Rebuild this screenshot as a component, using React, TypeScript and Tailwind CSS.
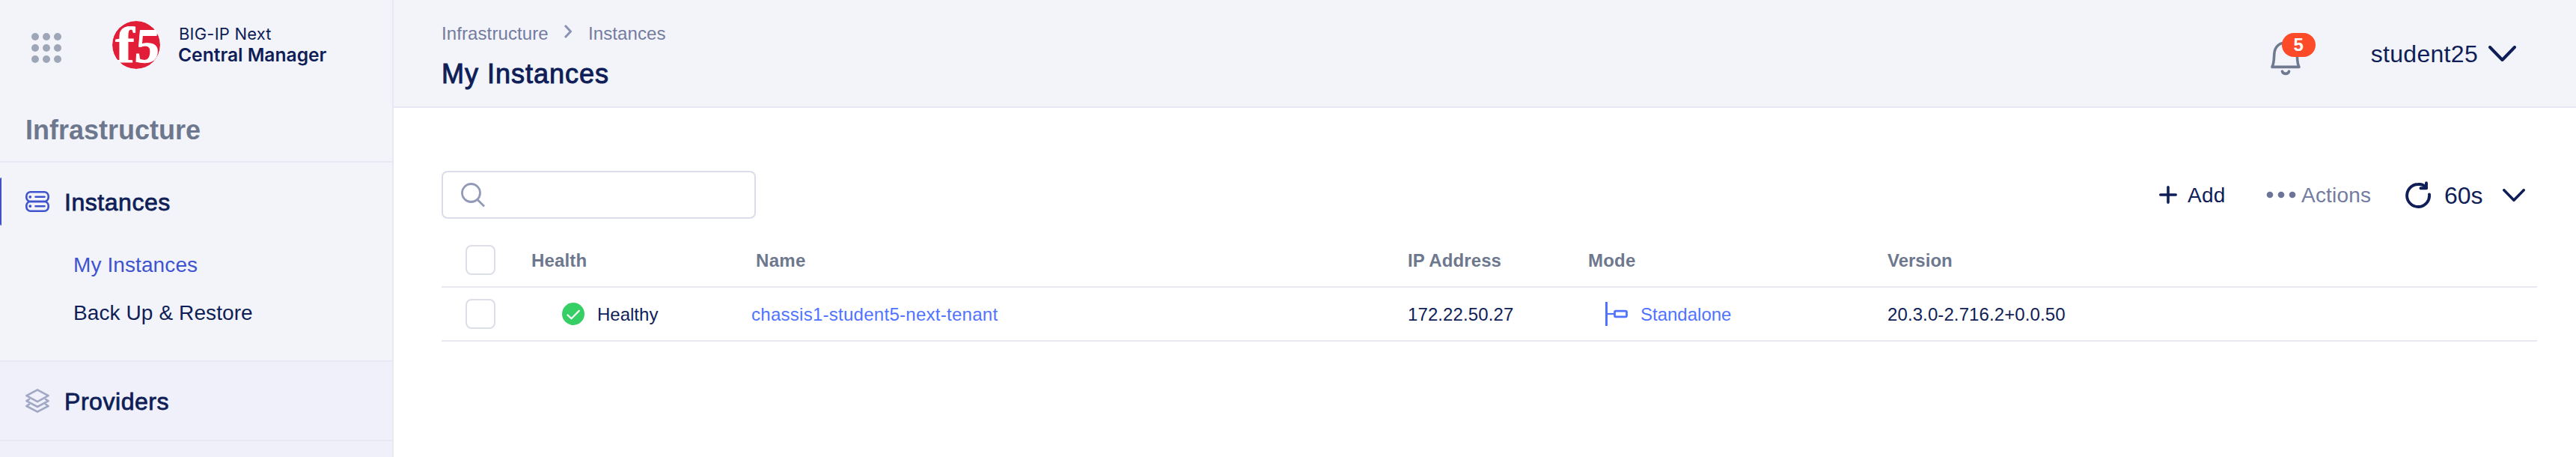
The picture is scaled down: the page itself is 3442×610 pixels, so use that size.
import React from "react";

const sans = "font-['Liberation_Sans',Arial,sans-serif]";

function GridDots() {
  const pos = [5, 20, 35];
  return (
    <svg width="40" height="40" viewBox="0 0 40 40" fill="#9ea7b8">
      {pos.map((y) => pos.map((x) => <circle key={`${x}-${y}`} cx={x} cy={y} r="5" />))}
    </svg>
  );
}

function Logo() {
  return (
    <svg className="overflow-visible" width="64" height="64" viewBox="0 0 64 64" fontFamily="Liberation Serif, serif" fontWeight="700">
      <circle cx="32" cy="32" r="32" fill="#e21d38" />
      <g fill="#fff" stroke="#fff">
        <text transform="translate(4 55) scale(1.16 1)" fontSize="67" strokeWidth="0.8">f</text>
        <text transform="translate(29 55) skewX(-5) scale(1 1)" fontSize="65" strokeWidth="1">5</text>
      </g>
      <circle cx="32" cy="32" r="36" fill="none" stroke="#f3f4fa" strokeWidth="8" />
    </svg>
  );
}

function ServerIcon() {
  return (
    <svg width="32" height="28" viewBox="0 0 32 28" fill="none" stroke="#3f54cc" strokeWidth="2.6" strokeLinecap="round">
      <rect x="1.3" y="1.3" width="29.4" height="12.7" rx="5.5" />
      <rect x="1.3" y="14" width="29.4" height="12.7" rx="5.5" />
      <path d="M13.5 7.8h12M13.5 20.2h12" />
      <circle cx="6.3" cy="7.8" r="1.1" fill="#3f54cc" strokeWidth="1.6" />
      <circle cx="6.3" cy="20.2" r="1.1" fill="#3f54cc" strokeWidth="1.6" />
    </svg>
  );
}

function LayersIcon() {
  return (
    <svg width="32" height="32" viewBox="0 0 32 32" fill="none" stroke="#a1a8c4" strokeWidth="2.6" strokeLinejoin="round" strokeLinecap="round">
      <path d="M16 1.3 30.6 9.2 16 17.2 1.4 9.2Z" />
      <path d="M5 14 1.4 16.2 16 24l14.6-7.8L27 14" />
      <path d="M5 20.6 1.4 23 16 30.7 30.6 23 27 20.6" />
    </svg>
  );
}

function BellIcon() {
  return (
    <svg width="40" height="48" viewBox="0 0 40 48" fill="none" stroke="#6f7a91" strokeWidth="3.6" strokeLinecap="round" strokeLinejoin="round">
      <path d="M2 35.4H38C35.4 31 35.8 26 35.2 18 34.6 8 28 3 20 3S5.4 8 4.8 18C4.4 26 4.4 31 2 35.4Z" />
      <path d="M15.5 41.300C16.5 45.4 23.5 45.4 24.5 41.3" />
    </svg>
  );
}

function Chevron({ w, h, stroke }: { w: number; h: number; stroke: number }) {
  const p = stroke / 2;
  return (
    <svg width={w} height={h} viewBox={`0 0 ${w} ${h}`} fill="none" stroke="#0f1e57" strokeWidth={stroke} strokeLinecap="round" strokeLinejoin="round">
      <path d={`M${p} ${p} ${w / 2} ${h - p} ${w - p} ${p}`} />
    </svg>
  );
}

function RefreshIcon() {
  return (
    <svg width="36" height="36" viewBox="0 0 36 36" fill="none" stroke="#0f1e57" strokeWidth="3.9" strokeLinecap="round" strokeLinejoin="round">
      <path d="M33 17.5A15 15 0 1 1 18 4C22.5 3.6 26.5 5.2 29 9" />
      <path d="M29 2.2V9.3H21.5" />
    </svg>
  );
}

function StandaloneIcon() {
  return (
    <svg width="30" height="32" viewBox="0 0 30 32" fill="none" stroke="#4f73ff">
      <path d="M1.5 0V32" strokeWidth="3" />
      <path d="M2 16H12" strokeWidth="2.2" />
      <rect x="12.5" y="12.2" width="16" height="7.6" rx="1.5" strokeWidth="2.8" />
    </svg>
  );
}

function Checkbox() {
  return <span className="block h-10 w-10 rounded-[8px] border-2 border-[#dcdee8] bg-white" />;
}

const cols = "grid grid-cols-[32px_88px_294px_877px_241px_400px_1fr] items-center h-[72px] border-b-2 border-[#e8e9f0] text-[24px] leading-[28px] whitespace-nowrap";

function Sidebar() {
  return (
    <aside className="flex w-[526px] shrink-0 flex-col border-r-2 border-[#e7e8f3] bg-[#f3f4fa]">
      <div className="flex h-[120px] items-start pt-7">
        <div className="mt-4 ml-[42px]"><GridDots /></div>
        <div className="ml-[68px]"><Logo /></div>
        <div className="mt-[3px] ml-[24px] font-['Inter',sans-serif] whitespace-nowrap">
          <div className="pl-px text-[22px] leading-[28px] tracking-[0.2px]">BIG-IP Next</div>
          <div className="text-[24.6px] leading-[28px] font-semibold">Central Manager</div>
        </div>
      </div>
      <div className="h-[97px] border-b-2 border-[#e7e8f3] pt-[34px] pl-[34px] text-[36px] leading-[40px] font-bold text-[#6d788e]">
        Infrastructure
      </div>
      <div className="h-[266px] border-b-2 border-[#e7e8f3] pt-5">
        <div className="flex h-16 items-center rounded-l-[2px] border-l-2 border-[#3f51cc] pl-8">
          <ServerIcon />
          <span className="mt-px ml-[20px] text-[32px] leading-[36px] tracking-[0.55px] [-webkit-text-stroke:0.8px_#0f1e57]">Instances</span>
        </div>
        <div className="mt-5 flex h-16 items-center pt-px pl-[98px] text-[28px] tracking-[0.1px] text-[#3d53cf]">My Instances</div>
        <div className="flex h-16 items-center pt-px pl-[98px] text-[28px] tracking-[0.1px]">{"Back Up & Restore"}</div>
      </div>
      <div className="flex h-[106px] items-center border-b-2 border-[#e7e8f3] bg-[#f0f0fa] pl-[34px]">
        <LayersIcon />
        <span className="mt-[2px] ml-[20px] text-[32px] leading-[36px] tracking-[0.55px] [-webkit-text-stroke:0.8px_#0f1e57]">Providers</span>
      </div>
      <div className="flex-1 bg-[#f0f0fa]" />
    </aside>
  );
}

function Header() {
  return (
    <header className="flex h-[144px] items-start justify-between border-b-2 border-[#e7e8f3] bg-[#f3f4fa] pl-16">
      <div className="pt-[31px] whitespace-nowrap">
        <div className="flex h-7 items-start text-[24px] leading-[28px] tracking-[0.1px] text-[#737ba0]">
          <span className="w-[163px]">Infrastructure</span>
          <svg className="mt-px" width="12" height="20" viewBox="0 0 12 20" fill="none" stroke="#8b93b3" strokeWidth="3" strokeLinejoin="round">
            <path d="M2 2 9.5 10 2 18" />
          </svg>
          <span className="ml-[21px]">Instances</span>
        </div>
        <h1 className="mt-5 text-[36px] leading-[40px] tracking-[1px] [-webkit-text-stroke:1px_#0f1e57]">My Instances</h1>
      </div>
      <div className="flex items-start pt-[44px] pr-[80px]">
        <div className="relative h-[56px] w-[60px]">
          <div className="pt-[10px]"><BellIcon /></div>
          <span className="absolute top-0 left-[15px] flex h-8 w-[45px] items-center justify-center rounded-full bg-[#fd4a28] text-[24px] leading-none font-bold text-white">
            5
          </span>
        </div>
        <span className="ml-[74px] pt-[10px] text-[32px] leading-[36px] tracking-[0.3px]">student25</span>
        <div className="mt-[17px] ml-[14px]"><Chevron w={37} h={21} stroke={4} /></div>
      </div>
    </header>
  );
}

function Toolbar() {
  return (
    <div className="flex h-16 items-center justify-between">
      <div className="flex h-16 w-[420px] items-center rounded-[8px] border-2 border-[#dadde7] pl-6">
        <svg width="32" height="34" viewBox="0 0 32 34" fill="none" stroke="#929ab8" strokeWidth="2.8">
          <circle cx="13.5" cy="14.5" r="12" />
          <path d="M22 23.5 31 32.5" />
        </svg>
      </div>
      <div className="flex items-center pr-4 text-[28px]">
        <svg width="24" height="24" viewBox="0 0 24 24" stroke="#0f1e57" strokeWidth="3.6" strokeLinecap="round">
          <path d="M12 1.8V22.2M1.8 12H22.2" />
        </svg>
        <span className="mt-px ml-[14px] w-[105px] tracking-[0.3px]">Add</span>
        <svg width="40" height="10" viewBox="0 0 40 10" fill="#6c7499">
          <circle cx="5" cy="5" r="4.3" />
          <circle cx="20" cy="5" r="4.3" />
          <circle cx="35" cy="5" r="4.3" />
        </svg>
        <span className="mt-px ml-[7px] w-[138px] tracking-[0.2px] text-[#747ca1]">Actions</span>
        <RefreshIcon />
        <span className="mt-px ml-[17px] w-[78px] text-[32px]">60s</span>
        <Chevron w={30} h={17} stroke={3.6} />
      </div>
    </div>
  );
}

function InstancesTable() {
  return (
    <div className="mt-5">
      <div className={cols + " font-bold text-[#6d788e]"}>
        <span />
        <Checkbox />
        <span className="pt-px tracking-[0.15px]">Health</span>
        <span className="pt-px pl-[6px] tracking-[0.3px]">Name</span>
        <span className="pt-px tracking-[0.1px]">IP Address</span>
        <span className="pt-px tracking-[0.2px]">Mode</span>
        <span className="pt-px">Version</span>
      </div>
      <div className={cols}>
        <span />
        <Checkbox />
        <span className="flex items-center pl-[41px]">
          <svg width="30" height="30" viewBox="0 0 30 30">
            <circle cx="15" cy="15" r="15" fill="#36cf66" />
            <path d="M7.5 16.5 12.5 21.3 22.8 10.8" fill="none" stroke="#fff" strokeWidth="2.2" strokeLinecap="round" strokeLinejoin="round" />
          </svg>
          <span className="mt-px ml-[17px]">Healthy</span>
        </span>
        <span className="pt-px tracking-[0.27px] text-[#4f73ff]">chassis1-student5-next-tenant</span>
        <span className="pt-px tracking-[0.1px]">172.22.50.27</span>
        <span className="flex items-center pl-[23px] text-[#4f73ff]">
          <StandaloneIcon />
          <span className="mt-px ml-[17px]">Standalone</span>
        </span>
        <span className="pt-px tracking-[0.1px]">20.3.0-2.716.2+0.0.50</span>
      </div>
    </div>
  );
}

export default function App() {
  return (
    <div className={"flex h-[610px] w-[3442px] overflow-hidden bg-white text-[#0f1e57] " + sans}>
      <Sidebar />
      <div className="flex flex-1 flex-col">
        <Header />
        <main className="flex-1 pt-[84px] pr-[52px] pl-16">
          <Toolbar />
          <InstancesTable />
        </main>
      </div>
    </div>
  );
}
